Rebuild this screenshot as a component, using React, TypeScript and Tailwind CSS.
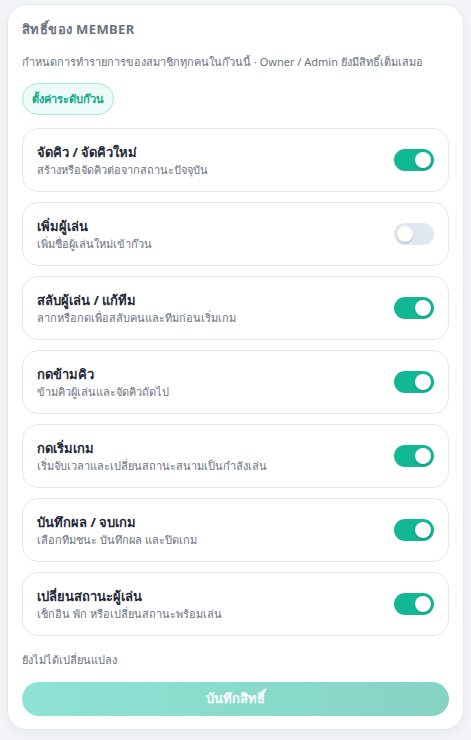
import { useState } from 'react'

const PERMS = [
  { title: 'จัดคิว / จัดคิวใหม่', desc: 'สร้างหรือจัดคิวต่อจากสถานะปัจจุบัน', on: true },
  { title: 'เพิ่มผู้เล่น', desc: 'เพิ่มชื่อผู้เล่นใหม่เข้าก๊วน', on: false },
  { title: 'สลับผู้เล่น / แก้ทีม', desc: 'ลากหรือกดเพื่อสลับคนและทีมก่อนเริ่มเกม', on: true },
  { title: 'กดข้ามคิว', desc: 'ข้ามคิวผู้เล่นและจัดคิวถัดไป', on: true },
  { title: 'กดเริ่มเกม', desc: 'เริ่มจับเวลาและเปลี่ยนสถานะสนามเป็นกำลังเล่น', on: true },
  { title: 'บันทึกผล / จบเกม', desc: 'เลือกทีมชนะ บันทึกผล และปิดเกม', on: true },
  { title: 'เปลี่ยนสถานะผู้เล่น', desc: 'เช็กอิน พัก หรือเปลี่ยนสถานะพร้อมเล่น', on: true },
]

function Toggle({ on, onClick }: { on: boolean; onClick: () => void }) {
  return (
    <button
      onClick={onClick}
      className={`relative w-[40px] h-[22px] rounded-full flex-shrink-0 transition-colors ${on ? 'bg-[#12b894]' : 'bg-[#e2e8f0]'}`}
    >
      <span
        className={`absolute top-[3px] w-[16px] h-[16px] rounded-full bg-white shadow-[0_1px_2px_rgba(15,23,42,0.25)] transition-all ${on ? 'left-[21px]' : 'left-[3px]'}`}
      />
    </button>
  )
}

export default function App() {
  const [perms, setPerms] = useState(PERMS)

  return (
    <div className="min-h-[740px] bg-[#f4f5f8] px-[7px] pt-[4px] font-['Noto_Sans',sans-serif]">
      <div className="bg-white border border-[#e3e8f0] rounded-[20px] shadow-[0_4px_14px_rgba(15,23,42,0.05)] px-[14px] pt-[15px] pb-[13px]">
        <div className="text-[13px] font-bold text-[#6b7280] tracking-[0.03em] leading-[18px]">สิทธิ์ของ MEMBER</div>
        <p className="mt-[16px] text-[11px] text-[#6b7280] leading-[16px]">
          กำหนดการทำรายการของสมาชิกทุกคนในก๊วนนี้ · Owner / Admin ยังมีสิทธิ์เต็มเสมอ
        </p>
        <div className="mt-[13px]">
          <span className="inline-flex items-center h-[32px] px-[9px] rounded-full bg-[#ecfbf7] border border-[#a8e9da] text-[11px] font-bold text-[#0ea888]">
            ตั้งค่าระดับก๊วน
          </span>
        </div>

        <div className="mt-[13px] flex flex-col gap-[10px]">
          {perms.map((p, i) => (
            <div key={p.title} className="h-[64px] border border-[#e3e8f0] rounded-[16px] px-[14px] flex items-center justify-between">
              <div>
                <div className="text-[13px] font-bold text-[#1f2937] leading-[18px]">{p.title}</div>
                <div className="mt-[1px] text-[11px] text-[#6b7280] leading-[15px]">{p.desc}</div>
              </div>
              <Toggle
                on={p.on}
                onClick={() => setPerms(ps => ps.map((x, j) => (j === i ? { ...x, on: !x.on } : x)))}
              />
            </div>
          ))}
        </div>

        <div className="mt-[16px] text-[11px] text-[#6b7280] leading-[15px]">ยังไม่ได้เปลี่ยนแปลง</div>
        <button className="mt-[15px] w-full h-[34px] rounded-full bg-gradient-to-r from-[#8ee3d4] to-[#86d3c4] text-white text-[13px] font-bold">
          บันทึกสิทธิ์
        </button>
      </div>
    </div>
  )
}
